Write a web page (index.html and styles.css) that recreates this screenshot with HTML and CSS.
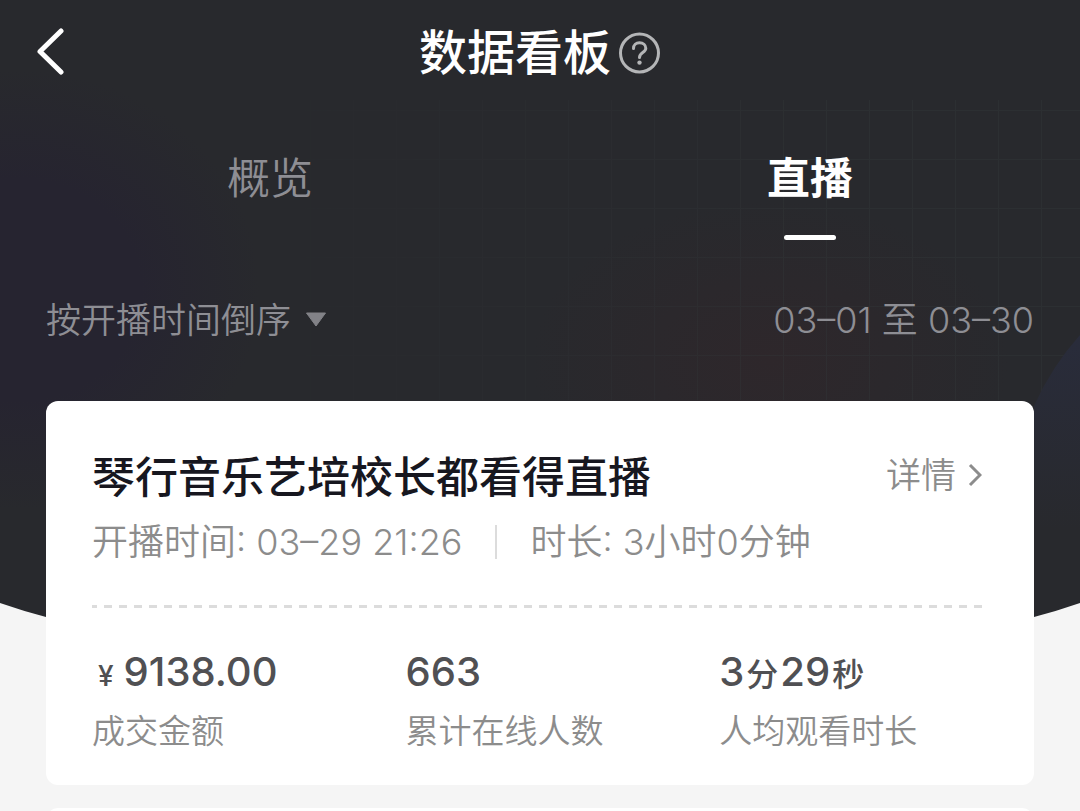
FILE: index.html
```html
<!DOCTYPE html>
<html lang="zh-CN">
<head>
    <meta charset="UTF-8">
    <meta name="viewport" content="width=device-width, initial-scale=1.0">
    <title>数据看板</title>
    <link rel="stylesheet" href="styles.css">
</head>
<body>
    <svg class="backdrop" viewBox="0 0 1080 680" preserveAspectRatio="none" aria-hidden="true">
        <defs>
            <pattern id="grid" width="43" height="49" patternUnits="userSpaceOnUse" patternTransform="translate(9 12)">
                <path d="M0 0H43M0 0V49" fill="none" stroke="#33383a" stroke-width="2"/>
            </pattern>
            <linearGradient id="gridFade" x1="0" x2="1">
                <stop offset="0.2" stop-color="#000"/>
                <stop offset="0.75" stop-color="#fff"/>
            </linearGradient>
            <mask id="gridMask"><rect y="100" width="1080" height="580" fill="url(#gridFade)"/></mask>
            <radialGradient id="violet">
                <stop offset="0.5" stop-color="#262430"/>
                <stop offset="1" stop-color="#262430" stop-opacity="0"/>
            </radialGradient>
            <radialGradient id="red">
                <stop offset="0" stop-color="#2e272b"/>
                <stop offset="1" stop-color="#2e272b" stop-opacity="0"/>
            </radialGradient>
            <linearGradient id="blue" x1="0" x2="0" y1="0" y2="1">
                <stop offset="0" stop-color="#292c3b"/>
                <stop offset="1" stop-color="#28292d"/>
            </linearGradient>
            <clipPath id="curve"><path d="M0 0H1080V603Q1057 611 1034 617Q540 740 46 617Q23 611 0 603Z"/></clipPath>
        </defs>
        <g clip-path="url(#curve)">
            <rect width="1080" height="680" fill="#28292d"/>
            <ellipse cx="20" cy="290" rx="240" ry="220" fill="url(#violet)"/>
            <ellipse cx="770" cy="360" rx="240" ry="160" fill="url(#red)"/>
            <rect width="1080" height="400" fill="url(#grid)" mask="url(#gridMask)" opacity="0.4"/>
            <path d="M1080 335Q1052 366 1034 406V530H1080Z" fill="url(#blue)"/>
        </g>
    </svg>

    <div class="page">
        <header class="topbar">
            <button type="button" class="icon-btn" aria-label="返回">
                <svg width="30" height="50" viewBox="0 0 30 50" fill="none" stroke="#fff" stroke-width="5" stroke-linecap="round" stroke-linejoin="round">
                    <path d="M25 3L4 23.500L25 44"/>
                </svg>
            </button>
            <div class="heading">
                <h1>数据看板</h1>
                <button type="button" class="icon-btn" aria-label="帮助">
                    <svg width="42" height="42" viewBox="0 0 42 42" fill="none" stroke="#b4b5b7" stroke-width="3" stroke-linecap="round">
                        <circle cx="20.500" cy="21" r="19"/>
                        <path d="M14.500 16.500C14.500 13 17 10.800 20.500 10.800C24.200 10.800 26.800 13 26.800 16.200C26.800 20.600 20.500 20.600 20.500 25.400"/>
                        <circle cx="20.500" cy="30.600" r="2.200" fill="#b4b5b7" stroke="none"/>
                    </svg>
                </button>
            </div>
        </header>

        <nav class="tabs">
            <a href="#overview">概览</a>
            <a href="#live" class="active" aria-current="page">直播</a>
        </nav>

        <div class="filters">
            <label class="sort">
                <select aria-label="排序">
                    <option>按开播时间倒序</option>
                </select>
                <svg width="22" height="15" viewBox="0 0 22 15" aria-hidden="true"><path d="M1.500 1H20.500L11 14Z" fill="#828287" stroke="#828287" stroke-linejoin="round"/></svg>
            </label>
            <button type="button" class="range">03–01 至 03–30</button>
        </div>

        <main class="list">
            <article class="card">
                <div class="card-head">
                    <h2>琴行音乐艺培校长都看得直播</h2>
                    <a href="#detail" class="detail">详情
                        <svg width="14" height="24" viewBox="0 0 14 24" fill="none" stroke="#8c8c8c" stroke-width="3" aria-hidden="true"><path d="M2 2L12 12L2 22"/></svg>
                    </a>
                </div>
                <p class="meta">
                    <span>开播时间: 03–29 21:26</span>
                    <span class="divider"></span>
                    <span>时长: 3小时0分钟</span>
                </p>
                <svg class="dashes" height="3" aria-hidden="true"><line x1="-3" y1="1.500" x2="100%" y2="1.500" stroke="#dcdcdc" stroke-width="3" stroke-dasharray="8 7"/></svg>
                <dl class="stats">
                    <div>
                        <dt>成交金额</dt>
                        <dd><small class="currency">¥</small>9138.00</dd>
                    </div>
                    <div>
                        <dt>累计在线人数</dt>
                        <dd>663</dd>
                    </div>
                    <div>
                        <dt>人均观看时长</dt>
                        <dd>3<small>分</small>29<small>秒</small></dd>
                    </div>
                </dl>
            </article>
            <article class="card"></article>
        </main>
    </div>
</body>
</html>
```

FILE: styles.css
```css
* { box-sizing: border-box; margin: 0; padding: 0; }
body {
    position: relative;
    background: #f5f5f5;
    font-family: Inter, "Noto Sans CJK SC", sans-serif;
    font-size: 35px;
    font-weight: 350;
}
a { color: inherit; text-decoration: none; }
button, select { border: none; background: none; color: inherit; font: inherit; cursor: pointer; }
svg { display: block; flex: none; }

.backdrop { position: absolute; top: 0; left: 0; width: 100%; height: 680px; }
.page { position: relative; height: 100vh; overflow: hidden; color: #8e8e94; }

.topbar { display: grid; grid-template-columns: 1fr auto 1fr; align-items: center; height: 106px; padding: 0 36px; }
.icon-btn { justify-self: start; }
.heading { display: flex; align-items: center; gap: 8px; }
.heading h1 { color: #fff; font-size: 48px; line-height: 64px; font-weight: 500; }

.tabs { display: grid; grid-template-columns: 1fr 1fr; padding-top: 42px; }
.tabs a { display: flex; flex-direction: column; align-items: center; height: 92px; font-size: 43px; line-height: 60px; }
.tabs .active { color: #fff; font-weight: 700; }
.tabs .active::after { content: ""; width: 52px; height: 5px; margin-top: 27px; border-radius: 3px; background: #fff; }

.filters { display: flex; justify-content: space-between; align-items: center; height: 161px; padding: 0 46px 2px; }
.sort { display: flex; align-items: center; gap: 13px; }
.sort select { appearance: none; line-height: 50px; }
.range { font-size: 36px; line-height: 50px; }

.list { display: flex; flex-direction: column; gap: 23px; padding: 0 46px; }
.card { min-height: 200px; padding: 46px 46px 30px; border-radius: 12px; background: #fff; color: #8c8c8c; }
.card-head { display: flex; justify-content: space-between; line-height: 60px; }
.card-head h2 { color: #17171f; font-size: 43px; font-weight: 500; }
.detail { display: flex; align-items: center; gap: 12px; height: 56px; padding-right: 6px; }
.meta { display: flex; align-items: center; margin-top: 10px; font-size: 36px; line-height: 50px; }
.divider { width: 2px; height: 34px; margin: 0 33px; background: #dcdcdc; }
.dashes { width: 100%; margin-top: 38px; }

.stats { display: grid; grid-template-columns: 35% 35% 1fr; margin-top: 37px; }
.stats div { display: flex; flex-direction: column-reverse; justify-content: flex-end; gap: 8px; }
.stats dt { font-size: 33px; line-height: 48px; }
.stats dd { color: #505053; font-size: 40px; line-height: 54px; font-weight: 500; }
.stats small { margin: 0 2px; font-size: 32px; line-height: 32px; }
.stats .currency { margin: 0 10px 0 6px; font-size: 28px; }
```
